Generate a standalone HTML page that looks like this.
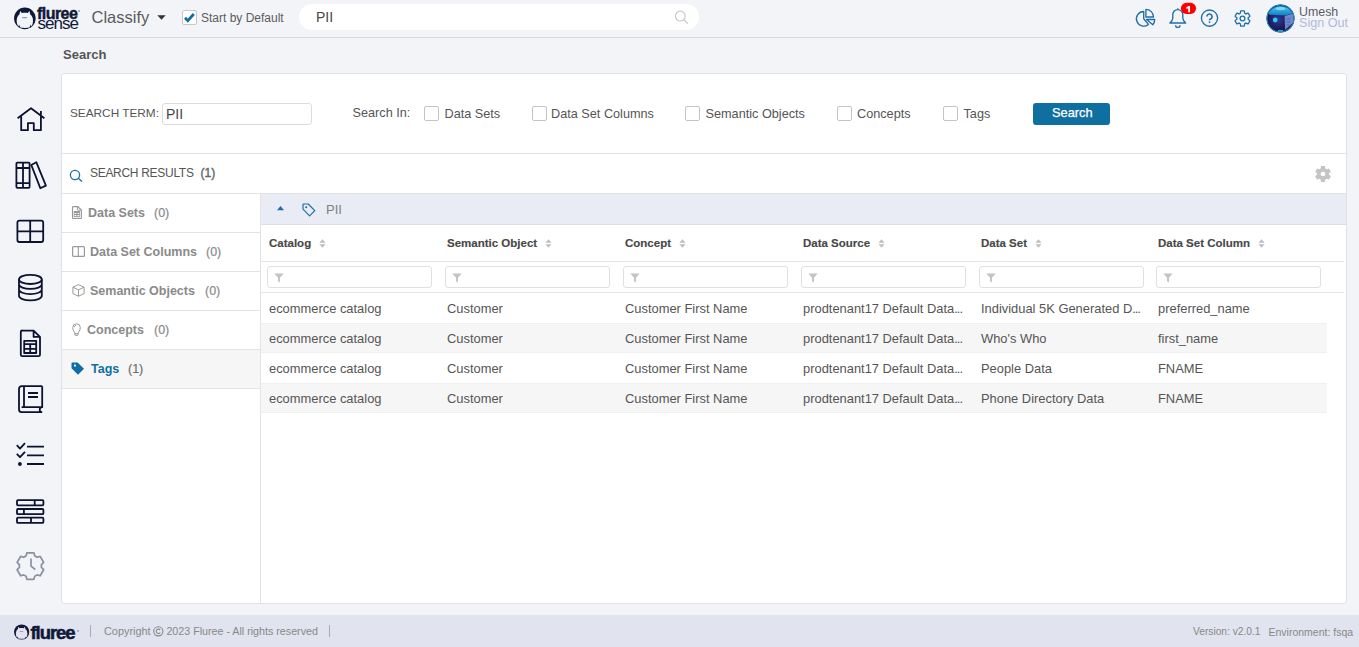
<!DOCTYPE html>
<html><head><meta charset="utf-8">
<style>
*{box-sizing:border-box;margin:0;padding:0}
html,body{width:1359px;height:647px;overflow:hidden;background:#f3f4f8;font-family:"Liberation Sans",sans-serif;color:#444}
.a{position:absolute}
.t{position:absolute;white-space:nowrap;line-height:1}
svg{position:absolute;overflow:visible}
#hdr{position:absolute;left:0;top:0;width:1359px;height:38px;background:#f3f4f8;border-bottom:1px solid #d9dadf}
#card{position:absolute;left:61px;top:73px;width:1286px;height:531px;background:#fff;border:1px solid #e1e2e6;border-radius:3px}
#footer{position:absolute;left:0;top:615px;width:1359px;height:32px;background:#e1e3ef}
.cb{position:absolute;width:15px;height:15px;border:1px solid #c4c4c4;border-radius:2px;background:#fff}
.lp{position:absolute;left:62px;width:198px;height:39px;border-bottom:1px solid #e3e3e3}
.lt{position:absolute;white-space:nowrap;line-height:1;font-size:12.5px;font-weight:bold;color:#8a8a8a}
.lc{position:absolute;white-space:nowrap;line-height:1;font-size:12.5px;color:#8a8a8a;-webkit-text-stroke:0.2px #8a8a8a}
.th{position:absolute;white-space:nowrap;line-height:1;font-size:11.5px;font-weight:bold;color:#484848;top:238px;-webkit-text-stroke:0.15px #484848}
.fi{position:absolute;top:266px;width:165px;height:22px;border:1px solid #e0e0e0;border-radius:3px;background:#fff}
.td{position:absolute;white-space:nowrap;line-height:1;font-size:12.9px;color:#555}
.row{position:absolute;left:261px;width:1066px;height:30px}
</style></head><body>
<div id="hdr"></div>
<!-- ========== HEADER ========== -->
<svg style="left:14px;top:7px" width="22" height="22" viewBox="0 0 22 22"><circle cx="10.85" cy="11.35" r="10.8" fill="#101838"/><path d="M6.2 4L7.9 6.1C9.8 5.5 11.9 5.5 13.8 6.1L15.4 4 16.2 7.2C18.4 9 19.2 11.5 19 14.5C18.8 17.8 17.5 19.8 15.6 20.6C12.5 21 9.2 21 6.1 20.6C4.2 19.8 2.9 17.8 2.7 14.5C2.5 11.5 3.3 9 5.5 7.2Z" fill="#f3f4f8"/><path d="M4.3 19.8L5 17.6 6.4 20.9zM17.4 19.8L16.7 17.6 15.3 20.9z" fill="#101838"/><path d="M8.2 10.7h4.9" stroke="#5a6080" stroke-width=".75"/></svg>
<div class="t" style="left:37px;top:5.6px;font-size:16px;font-weight:bold;color:#101838;letter-spacing:-0.55px;-webkit-text-stroke:0.45px #101838">fluree</div><div class="a" style="left:78px;top:10px;width:2px;height:2px;border-radius:1px;background:#9aa0b8"></div>
<div class="t" style="left:37.5px;top:14.8px;font-size:17px;color:#101838;letter-spacing:-0.95px">sense</div>
<div class="t" style="left:91.5px;top:9px;font-size:16.5px;color:#5a5a5a">Classify</div>
<svg style="left:157px;top:15px" width="9" height="5" viewBox="0 0 9 5"><path d="M.3 .3h8.4L4.5 4.7z" fill="#333"/></svg>
<div class="cb" style="left:182px;top:10px;border-color:#c8c8c8"></div>
<svg style="left:182px;top:10px" width="15" height="15" viewBox="0 0 15 15"><path d="M3 7.8l2.8 2.9 6-6.7" fill="none" stroke="#0f6fa3" stroke-width="2.75"/></svg>
<div class="t" style="left:201px;top:12px;font-size:12px;color:#5c5c5c">Start by Default</div>
<div class="a" style="left:299px;top:4px;width:400px;height:26px;background:#fff;border-radius:13px"></div>
<div class="t" style="left:316px;top:10px;font-size:14px;color:#444">PII</div>
<svg style="left:674px;top:10px" width="15" height="15" viewBox="0 0 15 15"><circle cx="6.3" cy="6.1" r="4.9" fill="none" stroke="#c8c8c8" stroke-width="1.2"/><line x1="9.8" y1="9.6" x2="13.8" y2="13.5" stroke="#c8c8c8" stroke-width="1.3"/></svg>
<!-- pie -->
<svg style="left:1135px;top:8px" width="21" height="20" viewBox="0 0 21 20" fill="none" stroke="#1f6fa6" stroke-width="1.35" stroke-linejoin="round"><path d="M8.7 10.8V3.5A7.3 7.3 0 1 0 13.4 16.4Z"/><path d="M10.9 9V1.4A7.6 7.6 0 0 1 18.5 9Z"/><path d="M11.5 11.5H19.7A8.2 8.2 0 0 1 17.8 16.8Z"/></svg>
<!-- bell -->
<svg style="left:1164px;top:0" width="36" height="30" viewBox="0 0 36 30"><path d="M5.9 23H21.7C20.1 21.6 18.8 20.2 18.8 18V14.6A5 5 0 0 0 8.8 14.6V18C8.8 20.2 7.5 21.6 5.9 23Z" fill="none" stroke="#1f6fa6" stroke-width="1.35" stroke-linejoin="round"/><path d="M13.8 9.6V8.3" stroke="#1f6fa6" stroke-width="1.3"/><path d="M11.6 25.2A2.2 2.2 0 0 0 16 25.2" fill="none" stroke="#1f6fa6" stroke-width="1.35"/><rect x="16.9" y="2.8" width="15.2" height="11.1" rx="5.55" fill="#f00"/><path d="M22.3 7.3L24.6 6H26V12.3H24.2V8.3L22.3 9z" fill="#fff"/></svg>
<!-- help -->
<svg style="left:1200px;top:9px" width="19" height="19" viewBox="0 0 19 19"><circle cx="9.5" cy="9.1" r="8.1" fill="none" stroke="#1f6fa6" stroke-width="1.35"/><path d="M6.9 7.6A2.6 2.6 0 1 1 10.9 9.8C10 10.3 9.5 10.7 9.5 11.2V11" fill="none" stroke="#1f6fa6" stroke-width="1.6"/><circle cx="9.5" cy="13.1" r="0.95" fill="#1f6fa6"/></svg>
<!-- gear -->
<svg style="left:1233px;top:9px" width="19" height="19" viewBox="0 0 24 24"><path d="M19.14 12.94c.04-.3.06-.61.06-.94 0-.32-.02-.64-.07-.94l2.03-1.58a.49.49 0 0 0 .12-.61l-1.92-3.32a.49.49 0 0 0-.59-.22l-2.39.96c-.5-.38-1.03-.7-1.62-.94l-.36-2.54a.48.48 0 0 0-.48-.41h-3.84c-.24 0-.43.17-.47.41l-.36 2.540c-.59.24-1.13.57-1.62.94l-2.39-.96a.48.48 0 0 0-.59.22L2.74 8.87c-.12.21-.08.47.12.61l2.03 1.58c-.05.3-.09.63-.09.94s.02.64.07.94l-2.03 1.58a.49.49 0 0 0-.12.61l1.92 3.32c.12.22.37.29.59.22l2.39-.96c.5.38 1.03.7 1.62.94l.36 2.54c.05.24.24.41.48.41h3.84c.24 0 .44-.17.47-.41l.36-2.54c.59-.24 1.13-.56 1.62-.94l2.39.96c.22.08.47 0 .59-.22l1.92-3.32c.12-.22.07-.47-.12-.61l-2.01-1.58z" fill="none" stroke="#1f6fa6" stroke-width="1.65"/><circle cx="12" cy="12" r="3" fill="none" stroke="#1f6fa6" stroke-width="1.65"/></svg>
<!-- avatar -->
<svg style="left:1266px;top:4px" width="29" height="29" viewBox="0 0 29 29"><defs><radialGradient id="av" cx="40%" cy="55%" r="60%"><stop offset="0" stop-color="#2d3a9a"/><stop offset=".6" stop-color="#1a1850"/><stop offset="1" stop-color="#2a2470"/></radialGradient><linearGradient id="cap" x1="0" y1="0" x2="0" y2="1"><stop offset="0" stop-color="#45c8f2"/><stop offset="1" stop-color="#0f7fc0"/></linearGradient></defs><circle cx="14.5" cy="14.5" r="14" fill="url(#av)"/><path d="M2.3 9.5A13.8 13.8 0 0 1 26.7 9.5L19.5 11.6 3.5 10.8z" fill="url(#cap)"/><ellipse cx="14.5" cy="4.6" rx="5" ry="1.6" fill="#9be6ff" opacity=".7"/><path d="M18.6 12l8.4-2.3.9 8.6-8.8 7.4z" fill="#6f86c8"/><path d="M20.5 15h4M20.5 18h4M20.5 21h3" stroke="#4a5aa0" stroke-width=".8"/><circle cx="9.2" cy="16" r="2.4" fill="#35c3f2"/><path d="M12 27h5" stroke="#35c3f2" stroke-width="1.6"/><circle cx="14.5" cy="14.5" r="13.6" fill="none" stroke="#1490c8" stroke-width="1"/></svg>
<div class="t" style="left:1299px;top:6px;font-size:12.4px;color:#5a5a6a">Umesh</div>
<div class="t" style="left:1299px;top:17px;font-size:12.6px;color:#b3b8d9">Sign Out</div>

<!-- ========== SIDEBAR ========== -->
<svg style="left:0;top:0" width="60" height="600" viewBox="0 0 60 600" fill="none" stroke="#0c1230" stroke-width="1.8" stroke-linejoin="round">
<path d="M17.6 118.2L31 108.2l13.4 10M21.2 115.6v14.6h6.7v-7h5.9v7h7.1V115.6M40.9 111v5.5"/>
<rect x="16.4" y="162.6" width="13.2" height="25.2" rx="1"/><path d="M23 162.6v25.2M16.4 168h13.2M16.4 183.2h13.2"/><path d="M31.3 165l5-2.8 9.6 23.4-5.6 2.6z"/>
<rect x="17.4" y="220.6" width="25.8" height="21.4" rx="2"/><path d="M30.2 220.6v21.4M17.4 231.3h25.8"/>
<ellipse cx="30.4" cy="279.4" rx="11.4" ry="4.6"/><path d="M19 279.4v16.4c0 2.6 5.1 4.6 11.4 4.6s11.4-2 11.4-4.6V279.4M19 284.3c0 2.6 5.1 4.6 11.4 4.6s11.4-2 11.4-4.6M19 289.5c0 2.6 5.1 4.6 11.4 4.6s11.4-2 11.4-4.6"/>
<path d="M22 330.6h11.6l6.4 6.3v17.8a1.5 1.5 0 0 1-1.5 1.5H22.3a1.5 1.5 0 0 1-1.5-1.5V332a1.5 1.5 0 0 1 1.5-1.5zM33.6 330.6v6.3h6.4"/><rect x="24.2" y="340.8" width="12" height="12.2"/><path d="M24.2 344.2h12M24.2 348.8h12M30.2 344.2v8.8"/>
<path d="M42.2 386.2H22a3 3 0 0 0-3 3v20.4a2.6 2.6 0 0 0 2.6 2.6h20.6M42.2 386.2v21M24 386.2v21M21.6 407.2h20.6a2.5 2.5 0 0 0 0 5M28 393h10M28 397h10"/>
<path d="M16.8 445.2l3.2 3.4 5-5.4M16.8 453.8l3.2 3.4 5-5.4M27 446.6h17M27 455.4h17M27 464h17"/><circle cx="19.9" cy="464" r="1.9" fill="#0c1230" stroke="none"/>
<rect x="17" y="500.1" width="26.4" height="5.2" rx="1"/><rect x="17" y="509" width="26.4" height="5.2" rx="1"/><rect x="17" y="517.7" width="26.4" height="5.2" rx="1"/><path d="M34.7 500.1v5.2M23.9 509v5.2M31 517.7v5.2"/>
</svg>
<svg style="left:0;top:0" width="60" height="600" viewBox="0 0 60 600" fill="none" stroke="#8b909e" stroke-width="1.7" stroke-linejoin="round"><path d="M26.10 555.90L26.90 552.80L33.90 552.80L34.70 555.90A10.2 10.2 0 0 1 37.08 557.28L40.17 556.42L43.67 562.48L41.38 564.72A10.2 10.2 0 0 1 41.38 567.48L43.67 569.72L40.17 575.78L37.08 574.92A10.2 10.2 0 0 1 34.70 576.30L33.90 579.40L26.90 579.40L26.10 576.30A10.2 10.2 0 0 1 23.72 574.92L20.63 575.78L17.13 569.72L19.42 567.48A10.2 10.2 0 0 1 19.42 564.72L17.13 562.48L20.63 556.42L23.72 557.28A10.2 10.2 0 0 1 26.10 555.90Z"/><path d="M31 558.6v7.6l4.3 3.3"/></svg>

<div class="t" style="left:63px;top:48px;font-size:13px;font-weight:bold;color:#555">Search</div>
<div id="card"></div>
<!-- search row -->
<div class="t" style="left:70px;top:108px;font-size:11.8px;color:#555">SEARCH TERM:</div>
<div class="a" style="left:162px;top:103px;width:150px;height:22px;border:1px solid #dcdcdc;border-radius:3px;background:#fff"></div>
<div class="t" style="left:166px;top:107px;font-size:14px;color:#444">PII</div>
<div class="t" style="left:352.5px;top:107px;font-size:12.7px;color:#555">Search In:</div>
<div class="cb" style="left:424px;top:106px"></div>
<div class="t" style="left:444.5px;top:108px;font-size:12.7px;color:#555">Data Sets</div>
<div class="cb" style="left:532px;top:106px"></div>
<div class="t" style="left:551px;top:108px;font-size:12.7px;color:#555">Data Set Columns</div>
<div class="cb" style="left:685px;top:106px"></div>
<div class="t" style="left:705.5px;top:108px;font-size:12.7px;color:#555">Semantic Objects</div>
<div class="cb" style="left:837px;top:106px"></div>
<div class="t" style="left:857px;top:108px;font-size:12.7px;color:#555">Concepts</div>
<div class="cb" style="left:943px;top:106px"></div>
<div class="t" style="left:963.5px;top:108px;font-size:12.7px;color:#555">Tags</div>
<div class="a" style="left:1033px;top:103px;width:77px;height:22px;background:#0f6fa1;border-radius:3px"></div>
<div class="t" style="left:1052px;top:107px;font-size:12.8px;color:#fff;-webkit-text-stroke:0.25px #fff">Search</div>
<div class="a" style="left:62px;top:153px;width:1284px;height:1px;background:#e3e3e3"></div>
<!-- results header -->
<svg style="left:69px;top:169px" width="14" height="13" viewBox="0 0 14 13"><circle cx="6" cy="6" r="4.6" fill="none" stroke="#1f6fa6" stroke-width="1.3"/><line x1="9.3" y1="9.3" x2="13" y2="12.6" stroke="#1f6fa6" stroke-width="1.4"/></svg>
<div class="t" style="left:90px;top:167px;font-size:12px;letter-spacing:-0.3px;color:#555">SEARCH RESULTS</div>
<div class="t" style="left:200.5px;top:167px;font-size:12px;color:#666;-webkit-text-stroke:0.4px #666">(1)</div>
<svg style="left:1313px;top:164px" width="20" height="20" viewBox="0 0 24 24"><path fill="#c4c4c4" d="M19.14 12.94c.04-.3.06-.61.06-.94 0-.32-.02-.64-.07-.94l2.03-1.58a.49.49 0 0 0 .12-.61l-1.92-3.32a.49.49 0 0 0-.59-.22l-2.39.96c-.5-.38-1.03-.7-1.62-.94l-.36-2.54a.48.48 0 0 0-.48-.41h-3.84c-.24 0-.43.17-.47.41l-.36 2.54c-.59.24-1.13.57-1.62.94l-2.39-.96a.48.48 0 0 0-.59.22L2.74 8.87c-.12.21-.08.47.12.61l2.03 1.58c-.05.3-.09.63-.09.94s.02.64.07.94l-2.03 1.58a.49.49 0 0 0-.12.61l1.92 3.32c.12.22.37.29.59.22l2.39-.96c.5.38 1.03.7 1.62.94l.36 2.54c.05.24.24.41.48.41h3.84c.24 0 .44-.17.47-.41l.36-2.54c.59-.24 1.13-.56 1.62-.94l2.39.96c.22.08.47 0 .59-.22l1.92-3.32c.12-.22.07-.47-.12-.61l-2.01-1.58zM12 14.8a2.8 2.8 0 1 1 0-5.6 2.8 2.8 0 0 1 0 5.6z" fill-rule="evenodd"/></svg>
<div class="a" style="left:62px;top:193px;width:1284px;height:1px;background:#e3e3e3"></div>

<!-- left panel -->
<div class="a" style="left:260px;top:194px;width:1px;height:409px;background:#e3e3e3"></div>
<div class="lp" style="top:194px"></div>
<div class="lp" style="top:233px"></div>
<div class="lp" style="top:272px"></div>
<div class="lp" style="top:311px"></div>
<div class="lp" style="top:350px;background:#f6f6f6"></div>
<svg style="left:72px;top:206px" width="10" height="13" viewBox="0 0 10 13"><path d="M1.3 .6h4.6l3.5 3.5v7.6a.8.8 0 0 1-.8.8H1.3a.8.8 0 0 1-.8-.8V1.4a.8.8 0 0 1 .8-.8z" fill="none" stroke="#999" stroke-width="1.1"/><path d="M5.4 .8v2.7a.6.6 0 0 0 .6.6h3.2" fill="none" stroke="#999" stroke-width="1"/><rect x="1.7" y="5" width="6.4" height="6.2" fill="#999"/><path d="M2.5 6.9h1.8v1.2H2.5zM5.5 6.9h1.8v1.2H5.5zM2.5 9.1h1.8v1.2H2.5zM5.5 9.1h1.8v1.2H5.5z" fill="#fff"/></svg>
<div class="lt" style="left:88px;top:207px">Data Sets</div>
<div class="lc" style="left:154px;top:207px">(0)</div>
<svg style="left:72px;top:246px" width="13" height="11" viewBox="0 0 13 11"><rect x=".6" y=".6" width="11.8" height="9.8" rx="1" fill="none" stroke="#9a9a9a" stroke-width="1.2"/><line x1="6.3" y1=".6" x2="6.3" y2="10.4" stroke="#9a9a9a" stroke-width="1.1"/></svg>
<div class="lt" style="left:90px;top:246px">Data Set Columns</div>
<div class="lc" style="left:206px;top:246px">(0)</div>
<svg style="left:72px;top:284px" width="13" height="13" viewBox="0 0 13 13"><path d="M6.5.7l5.6 2.5v6.4L6.5 12.2.9 9.6V3.2z M.9 3.2l5.6 2.6 5.6-2.6 M6.5 5.8v6.4" fill="none" stroke="#9a9a9a" stroke-width="1" stroke-linejoin="round"/></svg>
<div class="lt" style="left:90px;top:285px">Semantic Objects</div>
<div class="lc" style="left:205px;top:285px">(0)</div>
<svg style="left:72px;top:323px" width="9" height="13" viewBox="0 0 9 13"><path d="M2.8 10.6C2.6 8.6.7 7.6.7 4.6a3.8 3.8 0 0 1 7.6 0c0 3-1.9 4-2.1 6z M2.9 10.6h3.2v1.2a.7.7 0 0 1-.7.7H3.6a.7.7 0 0 1-.7-.7z" fill="none" stroke="#9a9a9a" stroke-width="1"/><path d="M2.2 4.2a2.3 2.3 0 0 1 2-2" fill="none" stroke="#9a9a9a" stroke-width=".9"/></svg>
<div class="lt" style="left:87px;top:324px">Concepts</div>
<div class="lc" style="left:154px;top:324px">(0)</div>
<svg style="left:71px;top:362px" width="14" height="13" viewBox="0 0 14 13"><path d="M1.4.5h5.2l6.4 6.2-6 6-6.5-6.5V1.4a.9.9 0 0 1 .9-.9z" fill="#0f6fa3"/><rect x="3" y="2.6" width="1.9" height="1.9" fill="#fff"/></svg>
<div class="lt" style="left:91px;top:363px;color:#0f6fa3">Tags</div>
<div class="lc" style="left:128px;top:363px;color:#666">(1)</div>

<!-- table -->
<div class="a" style="left:261px;top:194px;width:1085px;height:31px;background:#e9ecf4;border-bottom:1px solid #dcdfe6"></div>
<svg style="left:276px;top:205px" width="9" height="6" viewBox="0 0 9 6"><path d="M1 5.2L4.5 .9 8 5.2z" fill="#1a6ea5"/></svg>
<svg style="left:302px;top:203px" width="14" height="14" viewBox="0 0 14 14"><path d="M1.6 1h4.6l6.6 6.6-5.2 5.2L1 6.2V1.6a.6.6 0 0 1 .6-.6z" fill="none" stroke="#1f6fa6" stroke-width="1.2" stroke-linejoin="round"/><circle cx="4.2" cy="4.2" r="1" fill="#1f6fa6"/></svg>
<div class="t" style="left:326px;top:203px;font-size:13px;color:#808080">PII</div>
<div class="a" style="left:261px;top:261px;width:1083px;height:1px;background:#e6e6e6"></div>
<div class="a" style="left:261px;top:292px;width:1083px;height:1px;background:#e6e6e6"></div>
<div class="th" style="left:269px">Catalog</div>
<svg style="left:319px;top:239px" width="7" height="9" viewBox="0 0 7 9"><path d="M3.5 .3L6.6 3.7H.4z M3.5 8.7L6.6 5.3H.4z" fill="#bfbfbf"/></svg>
<div class="fi" style="left:267px"></div>
<svg style="left:274px;top:273px" width="10" height="10" viewBox="0 0 10 10"><path d="M.3 .6h9.4L6 4.8v4.6L4 8.2V4.8z" fill="#c4c4c4"/></svg>
<div class="th" style="left:447px">Semantic Object</div>
<svg style="left:545px;top:239px" width="7" height="9" viewBox="0 0 7 9"><path d="M3.5 .3L6.6 3.7H.4z M3.5 8.7L6.6 5.3H.4z" fill="#bfbfbf"/></svg>
<div class="fi" style="left:445px"></div>
<svg style="left:452px;top:273px" width="10" height="10" viewBox="0 0 10 10"><path d="M.3 .6h9.4L6 4.8v4.6L4 8.2V4.8z" fill="#c4c4c4"/></svg>
<div class="th" style="left:625px">Concept</div>
<svg style="left:679px;top:239px" width="7" height="9" viewBox="0 0 7 9"><path d="M3.5 .3L6.6 3.7H.4z M3.5 8.7L6.6 5.3H.4z" fill="#bfbfbf"/></svg>
<div class="fi" style="left:623px"></div>
<svg style="left:630px;top:273px" width="10" height="10" viewBox="0 0 10 10"><path d="M.3 .6h9.4L6 4.8v4.6L4 8.2V4.8z" fill="#c4c4c4"/></svg>
<div class="th" style="left:803px">Data Source</div>
<svg style="left:878px;top:239px" width="7" height="9" viewBox="0 0 7 9"><path d="M3.5 .3L6.6 3.7H.4z M3.5 8.7L6.6 5.3H.4z" fill="#bfbfbf"/></svg>
<div class="fi" style="left:801px"></div>
<svg style="left:808px;top:273px" width="10" height="10" viewBox="0 0 10 10"><path d="M.3 .6h9.4L6 4.8v4.6L4 8.2V4.8z" fill="#c4c4c4"/></svg>
<div class="th" style="left:981px">Data Set</div>
<svg style="left:1035px;top:239px" width="7" height="9" viewBox="0 0 7 9"><path d="M3.5 .3L6.6 3.7H.4z M3.5 8.7L6.6 5.3H.4z" fill="#bfbfbf"/></svg>
<div class="fi" style="left:979px"></div>
<svg style="left:986px;top:273px" width="10" height="10" viewBox="0 0 10 10"><path d="M.3 .6h9.4L6 4.8v4.6L4 8.2V4.8z" fill="#c4c4c4"/></svg>
<div class="th" style="left:1158px">Data Set Column</div>
<svg style="left:1258px;top:239px" width="7" height="9" viewBox="0 0 7 9"><path d="M3.5 .3L6.6 3.7H.4z M3.5 8.7L6.6 5.3H.4z" fill="#bfbfbf"/></svg>
<div class="fi" style="left:1156px"></div>
<svg style="left:1163px;top:273px" width="10" height="10" viewBox="0 0 10 10"><path d="M.3 .6h9.4L6 4.8v4.6L4 8.2V4.8z" fill="#c4c4c4"/></svg>
<div class="row" style="top:293px;background:#fff"></div>
<div class="td" style="left:269px;top:303px">ecommerce catalog</div>
<div class="td" style="left:447px;top:303px">Customer</div>
<div class="td" style="left:625px;top:303px">Customer First Name</div>
<div class="td" style="left:803px;top:303px">prodtenant17 Default Data<span style="letter-spacing:-1px">...</span></div>
<div class="td" style="left:981px;top:303px">Individual 5K Generated D<span style="letter-spacing:-1px">...</span></div>
<div class="td" style="left:1158px;top:303px">preferred_name</div>
<div class="row" style="top:323px;background:#f6f6f6;box-shadow:inset 0 1px #efefef,inset 0 -1px #efefef"></div>
<div class="td" style="left:269px;top:333px">ecommerce catalog</div>
<div class="td" style="left:447px;top:333px">Customer</div>
<div class="td" style="left:625px;top:333px">Customer First Name</div>
<div class="td" style="left:803px;top:333px">prodtenant17 Default Data<span style="letter-spacing:-1px">...</span></div>
<div class="td" style="left:981px;top:333px">Who's Who</div>
<div class="td" style="left:1158px;top:333px">first_name</div>
<div class="row" style="top:353px;background:#fff"></div>
<div class="td" style="left:269px;top:363px">ecommerce catalog</div>
<div class="td" style="left:447px;top:363px">Customer</div>
<div class="td" style="left:625px;top:363px">Customer First Name</div>
<div class="td" style="left:803px;top:363px">prodtenant17 Default Data<span style="letter-spacing:-1px">...</span></div>
<div class="td" style="left:981px;top:363px">People Data</div>
<div class="td" style="left:1158px;top:363px">FNAME</div>
<div class="row" style="top:383px;background:#f6f6f6;box-shadow:inset 0 1px #efefef,inset 0 -1px #efefef"></div>
<div class="td" style="left:269px;top:393px">ecommerce catalog</div>
<div class="td" style="left:447px;top:393px">Customer</div>
<div class="td" style="left:625px;top:393px">Customer First Name</div>
<div class="td" style="left:803px;top:393px">prodtenant17 Default Data<span style="letter-spacing:-1px">...</span></div>
<div class="td" style="left:981px;top:393px">Phone Directory Data</div>
<div class="td" style="left:1158px;top:393px">FNAME</div>

<div id="footer"></div>
<svg style="left:13.5px;top:624px" width="15.5" height="15.5" viewBox="0 0 22 22"><circle cx="10.85" cy="11.35" r="10.8" fill="#101838"/><path d="M6.2 4L7.9 6.1C9.8 5.5 11.9 5.5 13.8 6.1L15.4 4 16.2 7.2C18.4 9 19.2 11.5 19 14.5C18.8 17.8 17.5 19.8 15.6 20.6C12.5 21 9.2 21 6.1 20.6C4.2 19.8 2.9 17.8 2.7 14.5C2.5 11.5 3.3 9 5.5 7.2Z" fill="#e1e3ef"/><path d="M4.3 19.8L5 17.6 6.4 20.9zM17.4 19.8L16.7 17.6 15.3 20.9z" fill="#101838"/><path d="M8.2 10.7h4.9" stroke="#5a6080" stroke-width=".75"/></svg>
<div class="t" style="left:30.5px;top:623.5px;font-size:18.5px;font-weight:bold;color:#101838;letter-spacing:-1.05px;-webkit-text-stroke:0.5px #101838">fluree</div><div class="a" style="left:77px;top:630px;width:2px;height:2px;border-radius:1px;background:#9aa0b8"></div>
<div class="a" style="left:90px;top:625px;width:1px;height:12px;background:#aaa"></div>
<div class="t" style="left:104px;top:626px;font-size:10.9px;color:#888">Copyright</div><svg style="left:153px;top:626px" width="11" height="11" viewBox="0 0 11 11"><circle cx="5.3" cy="5.3" r="4.6" fill="none" stroke="#888" stroke-width="1.1"/><path d="M7.2 4a2.2 2.2 0 1 0 0 2.6" fill="none" stroke="#888" stroke-width="1.1"/></svg><div class="t" style="left:166.4px;top:626px;font-size:10.7px;color:#888">2023 Fluree - All rights reserved</div>
<div class="a" style="left:329px;top:625px;width:1px;height:12px;background:#aaa"></div>
<div class="t" style="left:1193px;top:627px;font-size:10.2px;color:#888">Version: v2.0.1</div>
<div class="t" style="left:1268.5px;top:627px;font-size:10.5px;color:#888">Environment: fsqa</div>
</body></html>
